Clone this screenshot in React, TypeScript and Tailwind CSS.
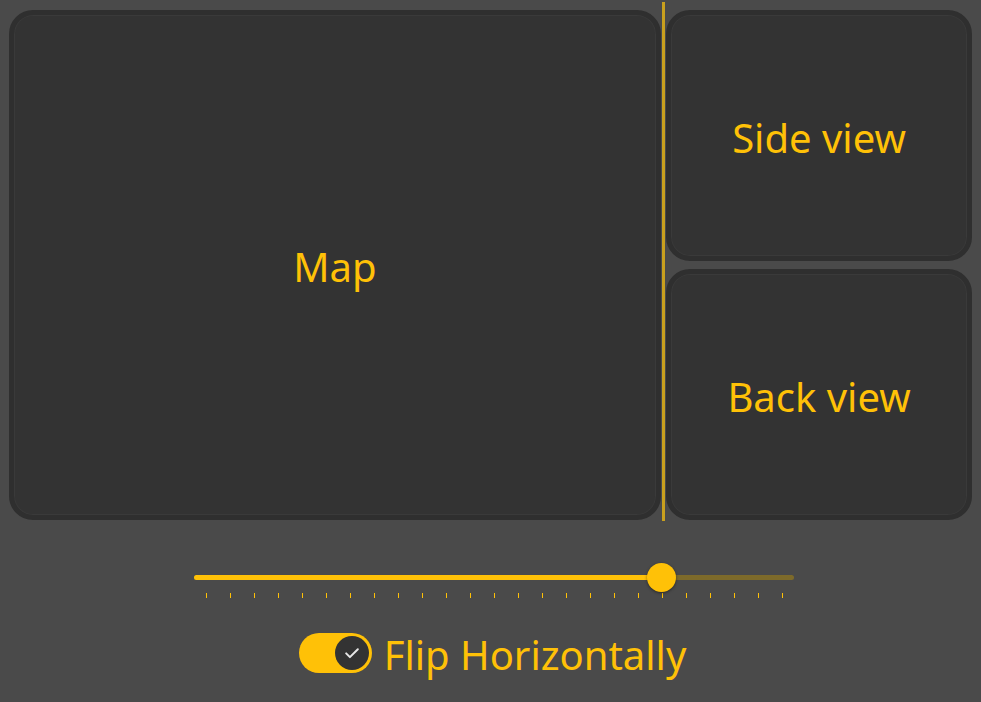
const YELLOW = "#ffc107";

function Panel({ label, className }: { label: string; className: string }) {
  return (
    <div
      className={`flex items-center justify-center rounded-[24px] border-[5px] border-[#2f2f2f] bg-[#333333] shadow-[inset_0_0_0_1px_#3a3a3a] ${className}`}
    >
      <span className="pt-[4px] text-[40px] leading-none text-[#ffc107]">{label}</span>
    </div>
  );
}

function Slider({ value, max }: { value: number; max: number }) {
  const ticks = Array.from({ length: max + 1 }, (_, i) => i);
  const thumbX = 12 + (value / max) * 576;

  return (
    <div className="ml-[194px] w-[600px]">
      <div className="relative h-[29px]">
        <div className="absolute left-0 right-0 top-[12px] h-[5px] rounded-full bg-[#7d6a2a]" />
        <div
          className="absolute left-0 top-[12px] h-[5px] rounded-full bg-[#ffc107]"
          style={{ width: thumbX }}
        />
        <div
          className="absolute top-0 h-[29px] w-[29px] rounded-full bg-[#ffc107] shadow-[0_1px_3px_rgba(0,0,0,0.45)]"
          style={{ left: thumbX - 15 }}
        />
      </div>
      <div className="mt-px flex">
        {ticks.map((t) => (
          <div key={t} className="w-[24px] pl-[12px]">
            <div className="h-[5px] w-px bg-[#ffc107]" />
          </div>
        ))}
      </div>
    </div>
  );
}

function Toggle() {
  return (
    <div className="flex h-[40px] w-[73px] items-center justify-end rounded-full bg-[#ffc107] pr-[3px]">
      <div className="flex h-[34px] w-[34px] items-center justify-center rounded-full bg-[#333333]">
        <svg width="20" height="20" viewBox="0 0 24 24" fill="none" stroke="#e6e6e6" strokeWidth="2.4" strokeLinecap="round" strokeLinejoin="round">
          <path d="M5 12.5l4.5 4.5L19 7.5" />
        </svg>
      </div>
    </div>
  );
}

export default function App() {
  return (
    <div
      className="h-[702px] w-[981px] overflow-hidden bg-[#4a4a4a]"
      style={{ fontFamily: '"Noto Sans", "Open Sans", sans-serif', color: YELLOW }}
    >
      <div className="flex h-[521px] pl-[9px] pt-[2px]">
        <Panel label="Map" className="mb-px mt-2 w-[652px]" />
        <div className="w-[5px] pl-px">
          <div className="h-full w-[3px] bg-[#c9a01e]" />
        </div>
        <div className="mb-px mt-2 flex w-[306px] flex-col gap-2">
          <Panel label="Side view" className="flex-1" />
          <Panel label="Back view" className="flex-1" />
        </div>
      </div>

      <div className="mt-[42px]">
        <Slider value={19} max={24} />
      </div>

      <div className="mt-[33px] flex items-center justify-center gap-[12px] pl-[4px]">
        <Toggle />
        <span className="pt-[4px] text-[40px] leading-none text-[#ffc107]">Flip Horizontally</span>
      </div>
    </div>
  );
}
